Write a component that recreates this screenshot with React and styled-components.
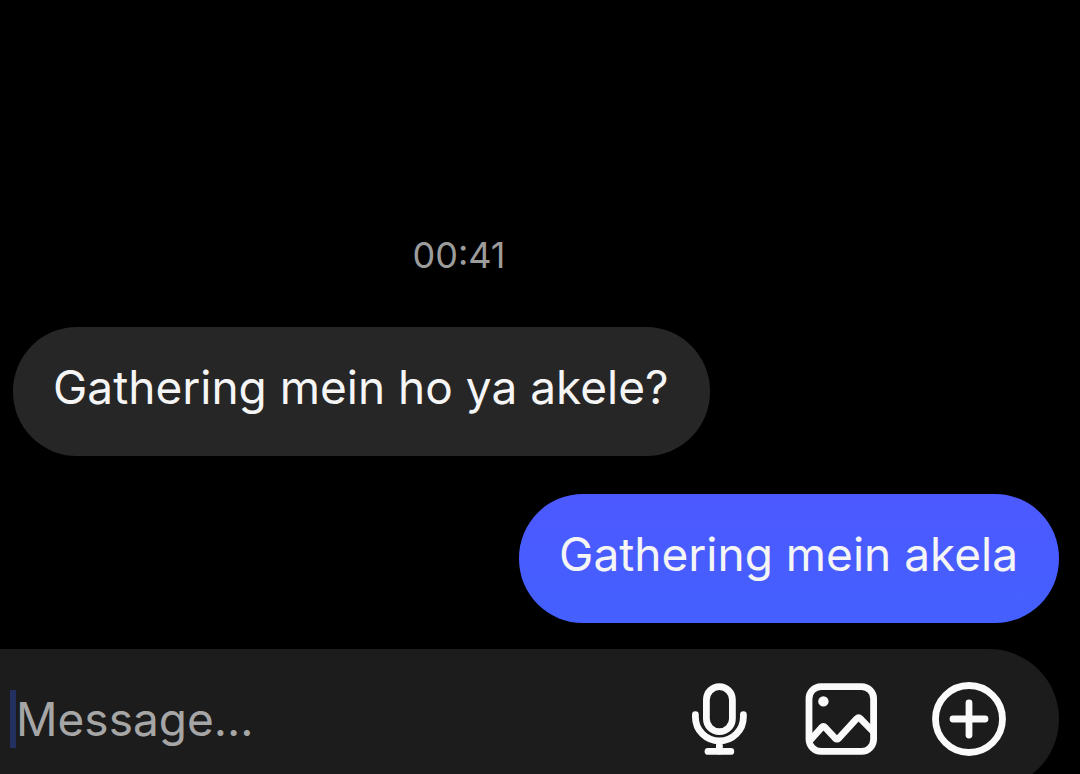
import React from "react";
import styled, { createGlobalStyle, css } from "styled-components";

const GlobalStyle = createGlobalStyle`
  * {
    box-sizing: border-box;
  }
  body {
    margin: 0;
    background: #000;
    font-family: Inter, "Liberation Sans", sans-serif;
  }
`;
const Screen = styled.main`
  display: flex;
  flex-direction: column;
  justify-content: flex-end;
  min-height: 100vh;
  overflow: hidden;
  background: #000;
`;
const Thread = styled.section`
  display: flex;
  flex-direction: column;
  padding: 0 21px 26px 13px;
`;
const Time = styled.time`
  align-self: center;
  margin: 0 154px 50px 0;
  font-size: 36px;
  line-height: 44px;
  color: #9c9c9c;
`;
const Bubble = styled.p`
  align-self: flex-start;
  margin: 0;
  padding: 32px 41px 40px 40px;
  border-radius: 64px;
  font-size: 46px;
  line-height: 57px;
  color: #f5f5f5;
  background: #262626;

  ${(props) =>
    props.$mine &&
    css`
      align-self: flex-end;
      margin-top: 38px;
      background: linear-gradient(#4c59ff, #4460ff);
    `}
`;
const Composer = styled.form`
  display: flex;
  align-items: center;
  gap: 55px;
  height: 140px;
  margin: 0 21px -15px 0;
  padding: 0 53px 0 10px;
  border-radius: 0 70px 70px 0;
  background: #1c1c1c;
`;
const Field = styled.label`
  display: flex;
  align-items: center;
  flex: 1;
  min-width: 0;
`;
const Caret = styled.span`
  width: 6px;
  height: 58px;
  background: #22315f;
`;
const MessageInput = styled.input`
  flex: 1;
  min-width: 0;
  height: 58px;
  padding: 0;
  border: none;
  outline: none;
  background: transparent;
  font-family: inherit;
  font-size: 46px;
  color: #f5f5f5;
  caret-color: transparent;

  &::placeholder {
    color: #a6a6a6;
    opacity: 1;
  }
`;
const IconButton = styled.button`
  display: flex;
  padding: 0;
  border: none;
  background: none;
  color: #fafafa;
  cursor: pointer;
`;
const Icon = styled.svg`
  display: block;
  overflow: visible;
  fill: none;
  stroke: currentColor;
  stroke-width: 6.8;
  stroke-linecap: round;
  stroke-linejoin: round;
`;

const MicIcon = () => (
  <Icon width="58" height="74" viewBox="0 0 58 74">
    <rect x="14.4" y="4.7" width="26" height="45" rx="13" />
    <path d="M3.4 32.7V35a24 24 0 0 0 48 0v-2.3M27.4 59v10" />
    <path d="M16 69.4h22.8" />
  </Icon>
);

const PhotoIcon = () => (
  <Icon width="72" height="74" viewBox="0 0 72 74">
    <rect x="4" y="4.7" width="64.6" height="64.6" rx="12" />
    <circle cx="18.4" cy="19.4" r="5.2" fill="currentColor" stroke="none" />
    <path d="M5 58.5L16.4 45.7q2-2 4 0L30 56q2 2 4 0L51.600 36.800q2-2 4 0L67.500 49" />
  </Icon>
);

const PlusIcon = () => (
  <Icon width="74" height="74" viewBox="0 0 74 74">
    <circle cx="37" cy="37" r="33.5" />
    <path d="M37 21v32M21 37h32" />
  </Icon>
);

class App extends React.Component {
  constructor(props) {
    super(props);

    this.state = {
      draft: "",
    };
  }

  render() {
    const { draft } = this.state;

    return (
      <Screen>
        <GlobalStyle />
        <Thread>
          <Time>00:41</Time>
          <Bubble>Gathering mein ho ya akele?</Bubble>
          <Bubble $mine>Gathering mein akela</Bubble>
        </Thread>
        <Composer onSubmit={(e) => e.preventDefault()}>
          <Field>
            <Caret />
            <MessageInput
              type="text"
              aria-label="Message"
              placeholder="Message..."
              value={draft}
              onChange={(e) => this.setState({ draft: e.target.value })}
            />
          </Field>
          <IconButton type="button" aria-label="Record voice message">
            <MicIcon />
          </IconButton>
          <IconButton type="button" aria-label="Send photo">
            <PhotoIcon />
          </IconButton>
          <IconButton type="button" aria-label="More">
            <PlusIcon />
          </IconButton>
        </Composer>
      </Screen>
    );
  }
}

export default App;
